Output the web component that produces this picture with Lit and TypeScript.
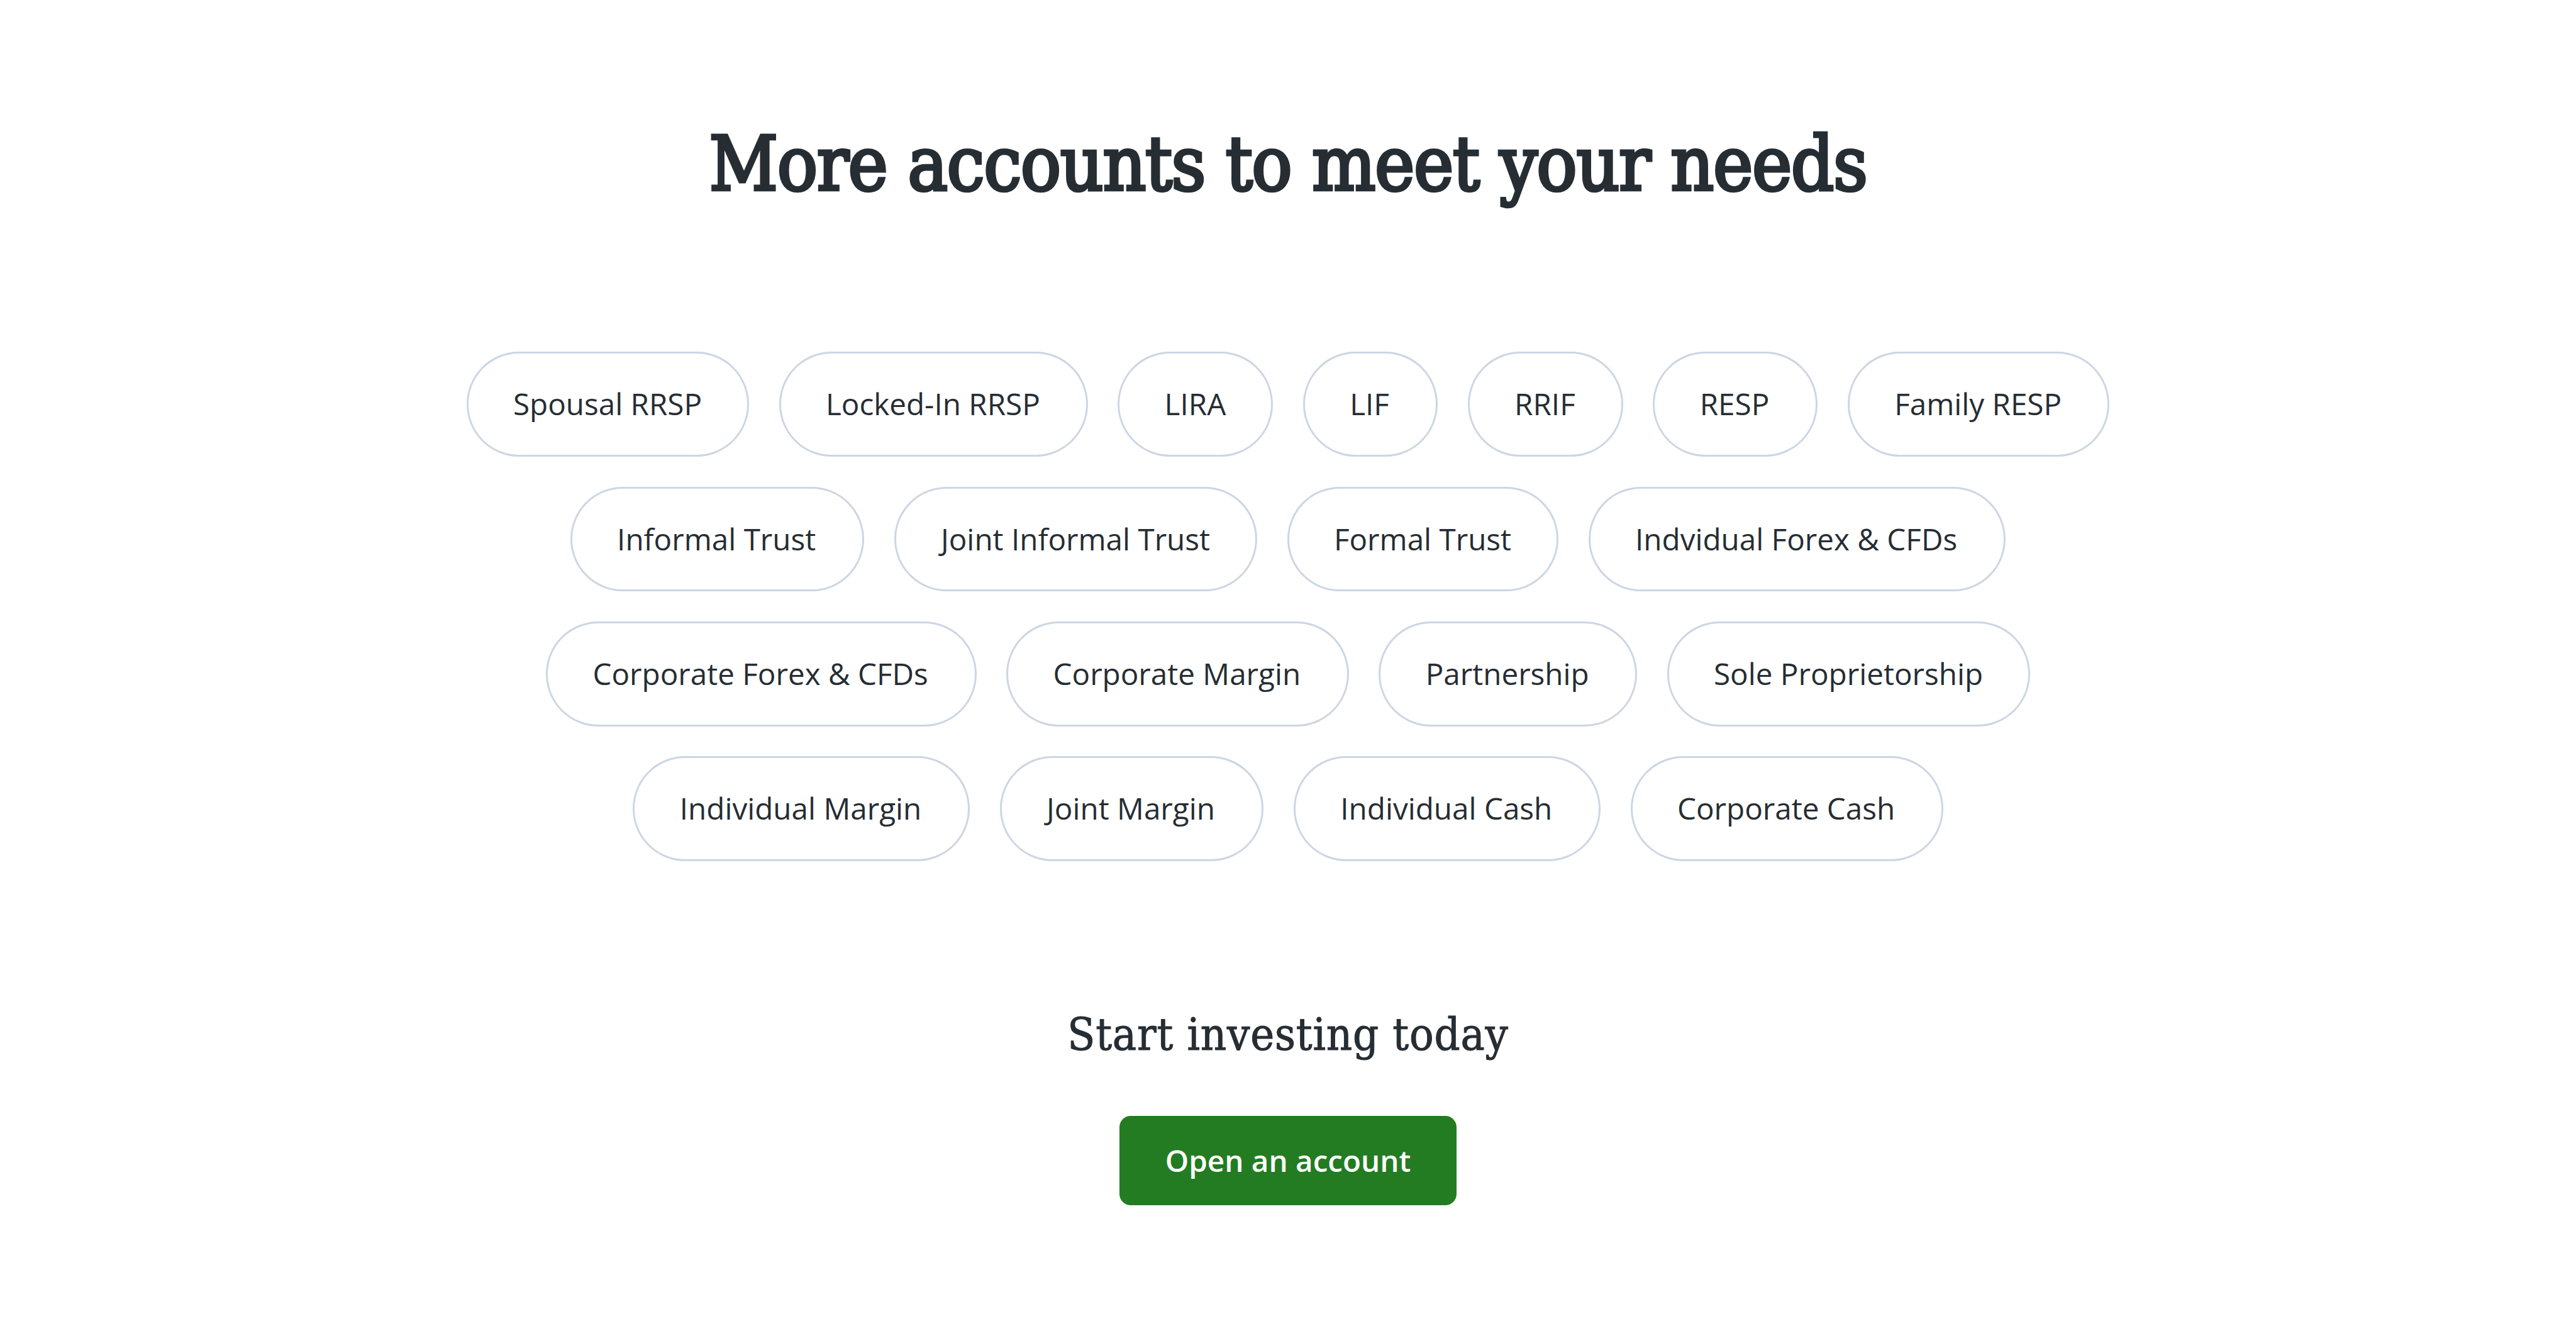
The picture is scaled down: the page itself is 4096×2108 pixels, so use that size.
import { html, LitElement, css } from "lit";
import { customElement } from "lit/decorators.js";

const UNIT = 2.976;

const accounts = [
  "Spousal RRSP",
  "Locked-In RRSP",
  "LIRA",
  "LIF",
  "RRIF",
  "RESP",
  "Family RESP",
  "Informal Trust",
  "Joint Informal Trust",
  "Formal Trust",
  "Indvidual Forex & CFDs",
  "Corporate Forex & CFDs",
  "Corporate Margin",
  "Partnership",
  "Sole Proprietorship",
  "Individual Margin",
  "Joint Margin",
  "Individual Cash",
  "Corporate Cash",
];

@customElement("account-pill")
class AccountPill extends LitElement {
  static styles = css`
    :host {
      display: block;
      flex: none;
      box-sizing: border-box;
      height: calc(var(--u) * 56);
      padding: 0 calc(var(--u) * 25 - 3px);
      border: 3px solid #cdd6e3;
      border-radius: calc(var(--u) * 28);
      font-size: calc(var(--u) * 16);
      line-height: calc(var(--u) * 54);
      white-space: nowrap;
    }
  `;

  firstUpdated() {
    const { width } = this.getBoundingClientRect();
    this.style.width = `${Math.ceil(width / UNIT + 0.03) * UNIT}px`;
  }

  render() {
    return html`<slot></slot>`;
  }
}

@customElement("app-root")
class AppRoot extends LitElement {
  static styles = css`
    :host {
      --u: 2.976px;
      display: flex;
      flex-direction: column;
      align-items: center;
      box-sizing: border-box;
      height: 100vh;
      padding-top: calc(var(--u) * 64);
      background: #fff;
      color: #262d33;
      font-family: "Open Sans", sans-serif;
      overflow: hidden;
    }

    h2,
    h3 {
      margin: 0;
      font-family: "Roboto Slab", "DejaVu Serif Condensed", "DejaVu Serif", serif;
      font-weight: 400;
      white-space: nowrap;
    }

    h2 {
      font-size: calc(var(--u) * 40);
      line-height: calc(var(--u) * 48);
      letter-spacing: -1.4px;
      -webkit-text-stroke: 4.5px currentColor;
    }

    h3 {
      margin-top: calc(var(--u) * 76.5);
      font-size: calc(var(--u) * 24);
      line-height: calc(var(--u) * 32);
      letter-spacing: 0.85px;
      -webkit-text-stroke: 1px currentColor;
    }

    .accounts {
      display: flex;
      flex-wrap: wrap;
      justify-content: center;
      gap: calc(var(--u) * 16);
      width: calc(var(--u) * 912);
      margin-top: calc(var(--u) * 76);
    }

    button {
      display: block;
      width: calc(var(--u) * 180);
      height: calc(var(--u) * 48);
      margin-top: calc(var(--u) * 27.5);
      padding: 0;
      border: 0;
      border-radius: calc(var(--u) * 6);
      background: #237c21;
      color: #fff;
      font: 600 calc(var(--u) * 16) / 1.5 "Open Sans", sans-serif;
      white-space: nowrap;
      cursor: pointer;
    }
  `;

  render() {
    return html`
      <h2>More accounts to meet your needs</h2>
      <div class="accounts">
        ${accounts.map((name) => html`<account-pill>${name}</account-pill>`)}
      </div>
      <h3>Start investing today</h3>
      <button>Open an account</button>
    `;
  }
}
